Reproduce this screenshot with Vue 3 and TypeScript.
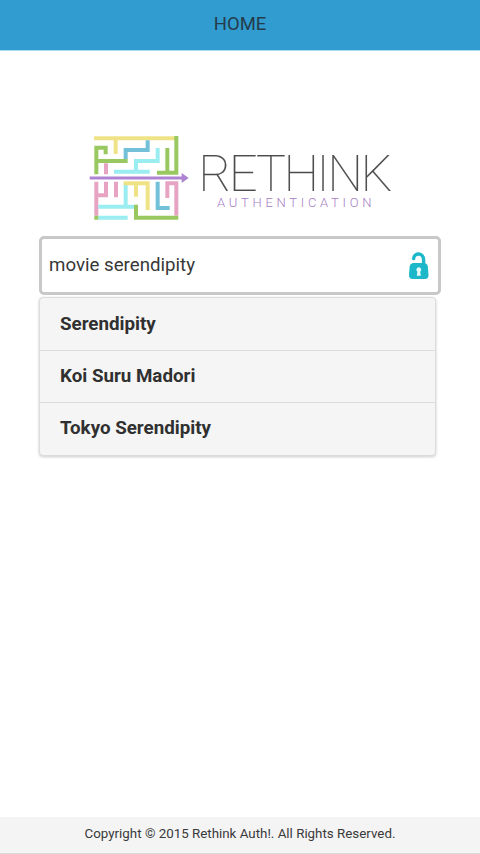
<script setup lang="ts">
import { ref } from 'vue'

const query = ref<string>('movie serendipity')
const suggestions: string[] = ['Serendipity', 'Koi Suru Madori', 'Tokyo Serendipity']
</script>

<template>
  <div class="page">
    <header class="bar">HOME</header>
    <main class="content">
      <div class="brand">
        <svg class="maze" viewBox="0 0 330 300" fill="none" stroke-width="12" aria-hidden="true">
          <path stroke="#f0e387" d="M30 31H274M95 31V78" />
          <path stroke="#99c861" d="M37 139V59H65V79M37 99H131M277 24V134H219M250 60V134" />
          <path stroke="#73c1d8" d="M125 93V66H191V37" />
          <path stroke="#9aedf0" d="M221 60V99H156V131M90 131H197" />
          <path stroke="#e6a4c2" d="M66 106V139M37 161V263M37 202H66V161M96 161V208M250 210V166H277V263" />
          <path stroke="#9aedf0" d="M125 166V236M43 236H150M43 269H131" />
          <path stroke="#f0e387" d="M119 166H191V246M156 166V206" />
          <path stroke="#73c1d8" d="M221 161V240H257" />
          <path stroke="#99c861" d="M156 230V269H283M31 269H43" />
          <path stroke="#ae83d1" stroke-width="9" d="M17 150H297" />
          <path fill="#ae83d1" d="M293 135L314 150L293 165Z" />
        </svg>
        <svg class="wordmark" viewBox="0 0 210 76">
          <text class="name" x="8.5" y="50.5" textLength="194">RETHINK</text>
          <text class="tagline" x="27" y="67" textLength="154.5">AUTHENTICATION</text>
        </svg>
      </div>
      <div class="search">
        <input v-model="query" type="text" aria-label="Search" />
        <svg class="lock" viewBox="0 0 22 28" aria-hidden="true">
          <path d="M5.6 6.6C6.4 0 15.6.6 15.6 7.8V13" fill="none" stroke="#1cb8ca" stroke-width="3.4" stroke-linecap="round" />
          <path d="M5 11H16.5Q19.2 11.4 19.8 14L20.5 23Q20.5 27 17 27H4.5Q1 27 1 23L1.7 14Q2.3 11.4 5 11Z" fill="#1cb8ca" />
          <path d="M10.8 15.2a2.5 2.5 0 0 1 1.4 4.5l.6 4H8.8l.6-4a2.5 2.5 0 0 1 1.4-4.5Z" fill="#e9fafb" />
        </svg>
      </div>
      <ul class="suggestions">
        <li v-for="item in suggestions" :key="item">{{ item }}</li>
      </ul>
    </main>
    <footer class="footer">Copyright © 2015 Rethink Auth!. All Rights Reserved.</footer>
  </div>
</template>

<style>
body {
  background: #fff;
}
</style>

<style scoped>
.page {
  display: flex;
  flex-direction: column;
  height: 100vh;
  box-sizing: border-box;
  font-family: Roboto, 'Liberation Sans', sans-serif;
  color: #303030;
}
.bar {
  height: 50px;
  line-height: 49px;
  flex: none;
  background: #309ccf;
  border-bottom: 1px solid #a8dced;
  text-align: center;
  font-size: 18.5px;
  color: #253b4b;
}
.content {
  flex: 1;
  padding: 77px 39px 0;
}
.brand {
  display: flex;
  padding-left: 45px;
  height: 108px;
}
.maze {
  flex: none;
  width: 110px;
  height: 100px;
}
.wordmark {
  flex: none;
  width: 210px;
  height: 76px;
  margin: 12px 0 0 -4px;
}
.name {
  font-family: Roboto, sans-serif;
  font-size: 50px;
  font-weight: 100;
  fill: #4c4c4c;
  stroke: #4c4c4c;
  stroke-width: 0.2px;
}
.tagline {
  font-size: 13px;
  font-weight: 300;
  fill: #a780c4;
}
.search {
  display: flex;
  align-items: center;
  box-sizing: border-box;
  width: 402px;
  height: 59px;
  padding: 0 8px 0 7px;
  border: 3px solid #c8c8c8;
  border-radius: 5px;
  background: #fff;
}
.search input {
  flex: 1;
  min-width: 0;
  padding: 0 0 2px;
  border: 0;
  outline: 0;
  background: none;
  font: 18.7px Roboto, sans-serif;
  color: #383838;
}
.lock {
  width: 22px;
  height: 28px;
}
.suggestions {
  list-style: none;
  box-sizing: border-box;
  width: 397px;
  margin: 2px 0 0;
  padding: 0;
  border: 1px solid #dcdcdc;
  border-radius: 4px;
  background: #f5f5f5;
  box-shadow: 0 1px 3px rgba(0, 0, 0, 0.2);
}
.suggestions li {
  box-sizing: border-box;
  height: 52px;
  padding-left: 20px;
  line-height: 52px;
  font-size: 18.75px;
  font-weight: 700;
  border-bottom: 1px solid #dcdcdc;
}
.suggestions li:first-child {
  height: 53px;
}
.suggestions li:last-child {
  border-bottom: 0;
}
.suggestions li:not(:first-child) {
  line-height: 50px;
}
.footer {
  flex: none;
  box-sizing: border-box;
  height: 37px;
  line-height: 34px;
  background: #f4f4f4;
  border-bottom: 1px solid #dadada;
  text-align: center;
  font-size: 13.35px;
  color: #3a3a3a;
}
</style>
